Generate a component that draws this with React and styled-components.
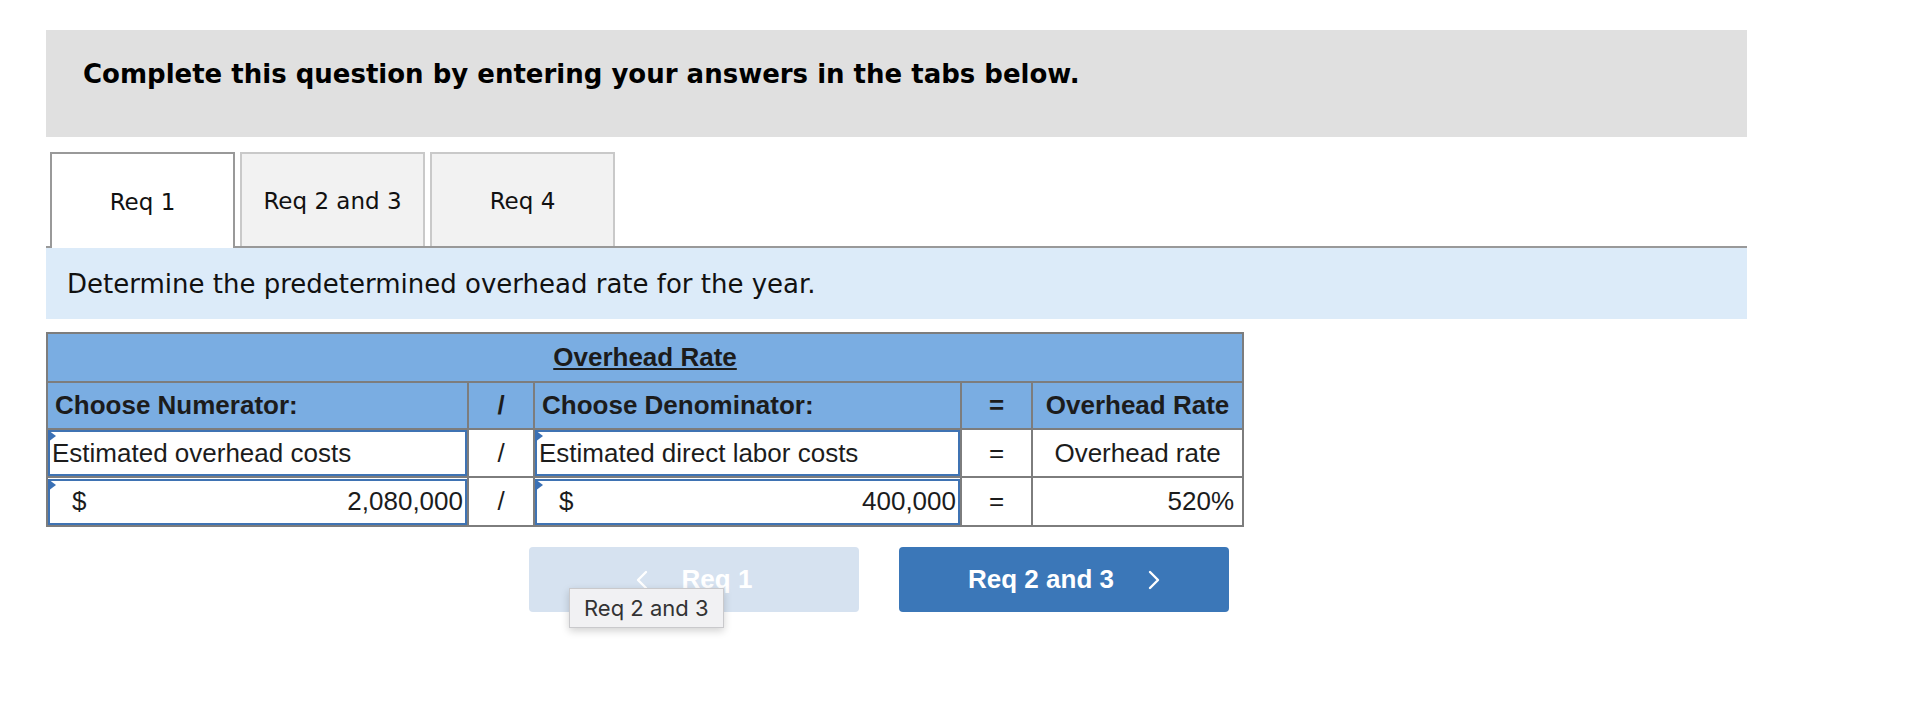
import styled, { createGlobalStyle } from 'styled-components';

const Global = createGlobalStyle`
  body {
    margin: 0;
    background: #ffffff;
    font-family: "Liberation Sans", Arial, sans-serif;
  }
`;

const Page = styled.div`
  width: 1701px;
  min-height: 680px;
  padding: 30px 0 0 46px;
`;

const Banner = styled.div`
  box-sizing: border-box;
  height: 107px;
  padding: 28px 0 0 37px;
  background-color: #e0e0e0;
  color: #000;
  font-family: "DejaVu Sans", Verdana, sans-serif;
  font-weight: bold;
  font-size: 26px;
  line-height: 32px;
`;

const TabBar = styled.div`
  margin-top: 15px;
  height: 94px;
  display: flex;
  gap: 5px;
  padding-left: 4px;
  border-bottom: 2px solid #999;
`;

const Tab = styled.div`
  box-sizing: border-box;
  width: 185px;
  height: ${(p) => (p.active ? '96px' : '94px')};
  display: flex;
  align-items: center;
  justify-content: center;
  padding-top: 2px;
  border: 2px solid ${(p) => (p.active ? '#999' : '#c9c9c9')};
  border-bottom: none;
  background-color: ${(p) => (p.active ? '#fff' : '#f2f2f2')};
  color: #111;
  font-family: "DejaVu Sans", Verdana, sans-serif;
  font-size: 23px;
  position: relative;
  z-index: 1;
`;

const Instruction = styled.div`
  height: 71px;
  display: flex;
  align-items: center;
  padding-left: 21px;
  background-color: #dcebf9;
  color: #111;
  font-family: "DejaVu Sans", Verdana, sans-serif;
  font-size: 26px;
`;

const Table = styled.table`
  margin-top: 13px;
  width: 1196px;
  border-collapse: collapse;
  table-layout: fixed;
  font-size: 26px;
  color: #1c1c1c;
`;

const Row = styled.tr`
  height: ${(p) => p.h || 48}px;
`;

const Th = styled.th`
  border: 2px solid #7d7d7d;
  background-color: #7aade2;
  font-weight: bold;
  text-align: ${(p) => p.align || 'center'};
  padding: 0 ${(p) => (p.align === 'left' ? '7px' : '0')};
`;

const Title = styled.span`
  text-decoration: underline;
`;

const Td = styled.td`
  border: 2px solid #7d7d7d;
  background-color: #fff;
  text-align: ${(p) => p.align || 'center'};
  padding: ${(p) => (p.field ? '0' : '0 8px')};
`;

const Field = styled.div`
  position: relative;
  box-sizing: border-box;
  height: 46px;
  display: flex;
  align-items: center;
  justify-content: space-between;
  border: 2px solid #3f73b3;
  padding: ${(p) => (p.money ? '0 2px 0 22px' : '0 2px')};
  &::before {
    content: '';
    position: absolute;
    left: -2px;
    top: -2px;
    border-top: 6px solid transparent;
    border-bottom: 6px solid transparent;
    border-left: 8px solid #3a70b5;
  }
`;

const Buttons = styled.div`
  margin-top: 20px;
  margin-left: 483px;
  display: flex;
  gap: 40px;
`;

const NavWrap = styled.div`
  position: relative;
`;

const NavButton = styled.button`
  width: 330px;
  height: 65px;
  display: flex;
  align-items: center;
  justify-content: center;
  gap: 34px;
  border: none;
  border-radius: 4px;
  background-color: ${(p) => (p.disabled ? '#d6e2f0' : '#3b77b8')};
  color: #fff;
  font-family: "Liberation Sans", Arial, sans-serif;
  font-weight: bold;
  font-size: 26px;
`;

const Tooltip = styled.div`
  position: absolute;
  left: 40px;
  top: 41px;
  z-index: 2;
  padding: 6px 14px;
  background-color: #f1f1f3;
  border: 1px solid #c9c9cc;
  box-shadow: 0 3px 8px rgba(0, 0, 0, 0.18);
  color: #333;
  font-family: Inter, "Liberation Sans", sans-serif;
  font-size: 22px;
  white-space: nowrap;
`;

const Chevron = ({ dir }) => (
  <svg width="12" height="20" viewBox="0 0 12 20" fill="none">
    <polyline
      points={dir === 'left' ? '10,2 2,10 10,18' : '2,2 10,10 2,18'}
      stroke="#fff"
      strokeWidth="2.4"
      strokeLinecap="round"
      strokeLinejoin="round"
    />
  </svg>
);

const App = () => {
  return (
    <Page>
      <Global />
      <Banner>Complete this question by entering your answers in the tabs below.</Banner>
      <TabBar>
        <Tab active>Req 1</Tab>
        <Tab>Req 2 and 3</Tab>
        <Tab>Req 4</Tab>
      </TabBar>
      <Instruction>Determine the predetermined overhead rate for the year.</Instruction>
      <Table>
        <colgroup>
          <col style={{ width: 421 }} />
          <col style={{ width: 66 }} />
          <col style={{ width: 427 }} />
          <col style={{ width: 71 }} />
          <col style={{ width: 211 }} />
        </colgroup>
        <tbody>
          <Row h={49}>
            <Th colSpan={5}>
              <Title>Overhead Rate</Title>
            </Th>
          </Row>
          <Row h={47}>
            <Th align="left">Choose Numerator:</Th>
            <Th>/</Th>
            <Th align="left">Choose Denominator:</Th>
            <Th>=</Th>
            <Th>Overhead Rate</Th>
          </Row>
          <Row>
            <Td field>
              <Field>Estimated overhead costs</Field>
            </Td>
            <Td>/</Td>
            <Td field>
              <Field>Estimated direct labor costs</Field>
            </Td>
            <Td>=</Td>
            <Td>Overhead rate</Td>
          </Row>
          <Row h={49}>
            <Td field>
              <Field money>
                <span>$</span>
                <span>2,080,000</span>
              </Field>
            </Td>
            <Td>/</Td>
            <Td field>
              <Field money>
                <span>$</span>
                <span>400,000</span>
              </Field>
            </Td>
            <Td>=</Td>
            <Td align="right">520%</Td>
          </Row>
        </tbody>
      </Table>
      <Buttons>
        <NavWrap>
          <NavButton disabled>
            <Chevron dir="left" />
            <span>Req 1</span>
          </NavButton>
          <Tooltip>Req 2 and 3</Tooltip>
        </NavWrap>
        <NavButton>
          <span>Req 2 and 3</span>
          <Chevron dir="right" />
        </NavButton>
      </Buttons>
    </Page>
  );
};

export default App;
